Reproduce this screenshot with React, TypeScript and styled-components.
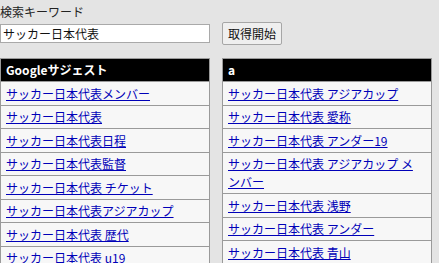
import styled, { createGlobalStyle } from 'styled-components';

const GlobalStyle = createGlobalStyle`
  html, body {
    margin: 0;
    padding: 0;
    background: #e4e4e4;
    font-family: "Noto Sans CJK JP", "Noto Sans", sans-serif;
    font-size: 12px;
    color: #222;
  }
`;

const Page = styled.div`
  padding-top: 3px;
  height: 260px;
  overflow: hidden;
`;

const Label = styled.div`
  line-height: 18px;
  height: 19px;
`;

const SearchRow = styled.div`
  display: flex;
  align-items: center;
  gap: 12px;
  height: 23px;
`;

const KeywordInput = styled.input`
  box-sizing: border-box;
  width: 210px;
  height: 19px;
  margin: 0;
  padding: 0 2px;
  border: 1px solid #a9a9a9;
  background: #fff;
  font-family: inherit;
  font-size: 12px;
  color: #111;
  outline: none;
`;

const Button = styled.button`
  box-sizing: border-box;
  height: 23px;
  margin: 0;
  padding: 0 5px;
  border: 1px solid #a6a6a6;
  border-radius: 2px;
  background: #efefef;
  font-family: inherit;
  font-size: 12px;
  color: #111;
`;

const Columns = styled.div`
  display: grid;
  grid-template-columns: 210px 210px;
  gap: 12px;
  align-items: start;
  margin-top: 13px;
`;

const Panel = styled.div`
  border: 1px solid #9a9a9a;
  border-bottom: none;
  background: #f7f7f7;
`;

const Header = styled.div`
  height: 22px;
  line-height: 22px;
  padding: 0 5px;
  background: #000;
  color: #fff;
  font-weight: bold;
  font-size: 12px;
`;

const Row = styled.div`
  border-top: 1px solid #9a9a9a;
  padding: 2.5px 9px 2px 5px;
  line-height: 18px;
`;

const Link = styled.a`
  color: #0000b8;
  text-decoration: underline;
  cursor: pointer;
`;

const googleItems = [
  'サッカー日本代表メンバー',
  'サッカー日本代表',
  'サッカー日本代表日程',
  'サッカー日本代表監督',
  'サッカー日本代表 チケット',
  'サッカー日本代表アジアカップ',
  'サッカー日本代表 歴代',
  'サッカー日本代表 u19',
];

const aItems = [
  'サッカー日本代表 アジアカップ',
  'サッカー日本代表 愛称',
  'サッカー日本代表 アンダー19',
  'サッカー日本代表 アジアカップ メンバー',
  'サッカー日本代表 浅野',
  'サッカー日本代表 アンダー',
  'サッカー日本代表 青山',
  'サッカー日本代表 アギーレ',
];

function SuggestPanel({ title, items }: { title: string; items: string[] }) {
  return (
    <Panel>
      <Header>{title}</Header>
      {items.map((item) => (
        <Row key={item}>
          <Link>{item}</Link>
        </Row>
      ))}
    </Panel>
  );
}

export default function App() {
  return (
    <>
      <GlobalStyle />
      <Page>
        <Label>検索キーワード</Label>
        <SearchRow>
          <KeywordInput defaultValue="サッカー日本代表" />
          <Button>取得開始</Button>
        </SearchRow>
        <Columns>
          <SuggestPanel title="Googleサジェスト" items={googleItems} />
          <SuggestPanel title="a" items={aItems} />
        </Columns>
      </Page>
    </>
  );
}
